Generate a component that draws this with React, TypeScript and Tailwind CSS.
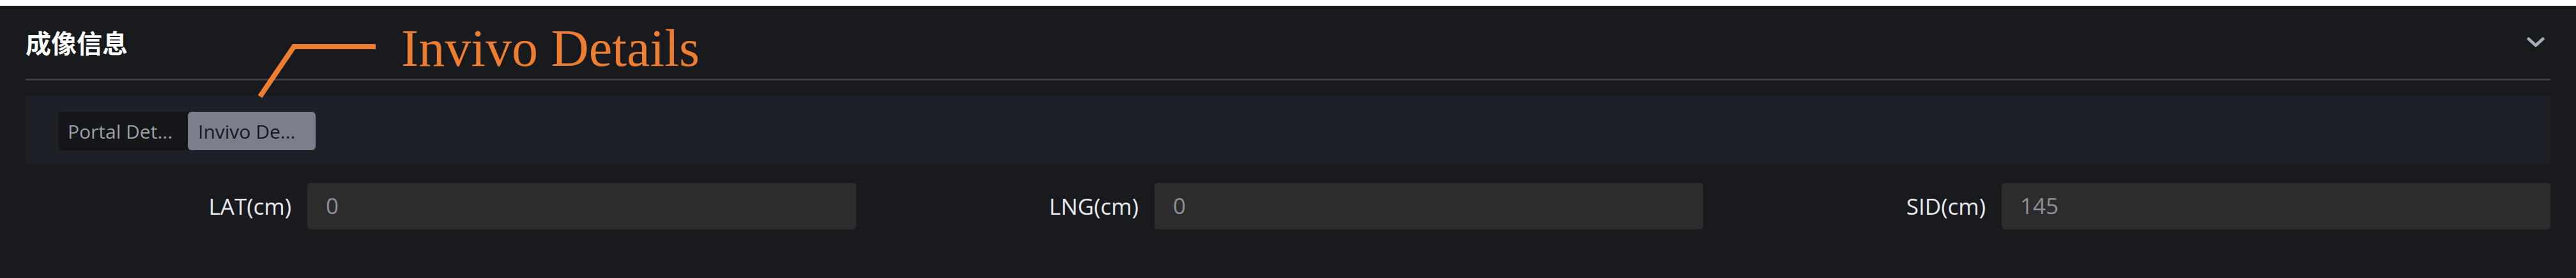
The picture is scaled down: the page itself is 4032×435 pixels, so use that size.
import React from "react";

const fields = [
  { label: "LAT(cm)", value: "0" },
  { label: "LNG(cm)", value: "0" },
  { label: "SID(cm)", value: "145" },
];

const App: React.FC = () => {
  return (
    <div className="relative w-[4032px] h-[435px] bg-white overflow-hidden">
      <div className="h-[9px] bg-white" />
      <div className="h-[426px] bg-[#181a1e] pl-[40px] pr-[40px]">
        {/* header */}
        <div className="flex items-center justify-between h-[117px] border-b-[3px] border-[#3a3d45]">
          <h2
            className="text-[40px] font-bold text-white leading-none"
            style={{ fontFamily: '"Noto Sans CJK SC", "Noto Sans", sans-serif' }}
          >
            成像信息
          </h2>
          <svg width="28" height="20" viewBox="0 0 28 20" className="mr-[9px]">
            <path
              d="M3 5 L14 15 L25 5"
              fill="none"
              stroke="#a3abb9"
              strokeWidth="5"
              strokeLinecap="round"
              strokeLinejoin="round"
            />
          </svg>
        </div>

        {/* tabs panel */}
        <div className="mt-[24px] h-[107px] bg-[#1e2028] pl-[51px] pt-[25px]">
          <div
            className="flex gap-[4px] h-[60px] w-fit bg-[#141619] rounded-[6px] text-[30px]"
            style={{ fontFamily: '"Open Sans", "Noto Sans", sans-serif' }}
          >
            <div className="w-[199px] h-full flex items-center pl-[15px] text-[#9aa0aa]">
              Portal Det...
            </div>
            <div className="w-[200px] h-full flex items-center pl-[16px] rounded-[6px] bg-[#7b7f8c] text-[#161920]">
              Invivo De...
            </div>
          </div>
        </div>

        {/* fields */}
        <div
          className="mt-[29px] grid grid-cols-3 gap-[26px] text-[35px]"
          style={{ fontFamily: '"Open Sans", "Noto Sans", sans-serif' }}
        >
          {fields.map((f) => (
            <div key={f.label} className="flex items-center gap-[25px] h-[73px]">
              <div className="w-[416px] text-right text-[#e8eaee] leading-none">{f.label}</div>
              <div className="flex-1 h-full bg-[#2c2c2c] rounded-[5px] flex items-center pl-[29px] text-[#8d9199]">
                {f.value}
              </div>
            </div>
          ))}
        </div>
      </div>

      {/* annotation overlay */}
      <svg className="absolute inset-0 pointer-events-none" width="4032" height="435">
        <polyline
          points="407,151 460,73 588,73"
          fill="none"
          stroke="#ed7d31"
          strokeWidth="8"
        />
      </svg>
      <div
        className="absolute left-[628px] top-[35px] text-[82px] leading-none text-[#ed7d31] whitespace-nowrap"
        style={{ fontFamily: '"Liberation Serif", "Times New Roman", serif' }}
      >
        Invivo Details
      </div>
    </div>
  );
};

export default App;
